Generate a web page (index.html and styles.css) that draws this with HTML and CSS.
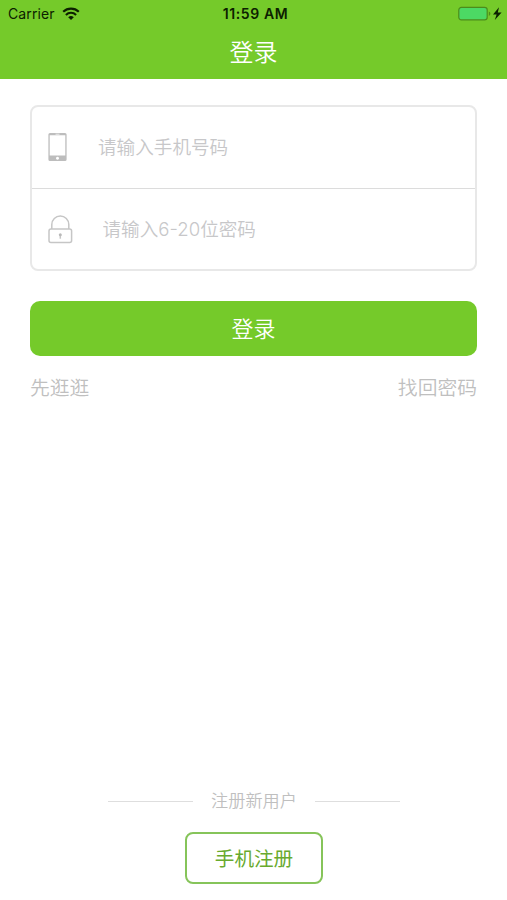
FILE: index.html
```html
<!DOCTYPE html>
<html lang="zh-CN">
<head>
  <meta charset="UTF-8" />
  <meta name="viewport" content="width=device-width, initial-scale=1.0"/>
  <title>登录</title>
  <link rel="stylesheet" href="styles.css">
</head>
<body>

  <header class="header">
    <div class="statusbar">
      <div class="carrier">
        <span>Carrier</span>
        <svg class="wifi" width="18" height="13" viewBox="0 0 18 13">
          <path d="M1.2 4.8a11.2 11.2 0 0 1 15.6 0M3.9 7.9a7.3 7.3 0 0 1 10.2 0" fill="none" stroke="#0c2000" stroke-width="2.1"/>
          <path d="M6.2 10.2a4.2 4.2 0 0 1 5.600 0L9 12.900z" fill="#0c2000"/>
        </svg>
      </div>
      <span class="time">11:59 AM</span>
      <svg class="battery" width="45" height="16" viewBox="0 0 45 16">
        <rect x="0.8" y="1.3" width="28.4" height="12.6" rx="2.6" fill="#4cd964" stroke="#4c8c1b" stroke-width="1.2"/>
        <path d="M30.8 5.500v4.400q1.600-.6 1.600-2.200T30.800 5.500z" fill="#4c8c1b"/>
        <path d="M41 1.300 35 8.500h3.600l-1.800 5.400L43.600 6.500H39.800z" fill="#0c2000"/>
      </svg>
    </div>
    <h1>登录</h1>
  </header>

  <main>
    <form class="login-form">
      <div class="fields">
        <label class="field">
          <svg width="20" height="30" viewBox="0 0 20 30">
            <path fill="#bdbdbd" fill-rule="evenodd" d="M2 1h15a1.6 1.6 0 0 1 1.6 1.6v24.8A1.6 1.6 0 0 1 17 29H2a1.6 1.6 0 0 1-1.600-1.600V2.600A1.600 1.600 0 0 1 2 1zM1.700 3.300v20.100h15.600V3.300zM9.500 24.800a1.500 1.500 0 1 0 .01 0z"/>
            <path d="M7.500 2.200h4" stroke="#fff" stroke-width="0.7"/>
          </svg>
          <input class="phone" type="tel" placeholder="请输入手机号码">
        </label>
        <label class="field">
          <svg width="25" height="30" viewBox="0 0 25 30">
            <g fill="none" stroke="#c6c6c6" stroke-width="1.5">
              <rect x="1" y="15" width="22.600" height="13.600" rx="2"/>
              <path d="M3.800 15V10.500a8.500 8.500 0 0 1 17 0V15"/>
              <path d="M12.300 20.500v4.200"/>
            </g>
            <circle cx="12.300" cy="20.700" r="1.500" fill="#b9b9b9"/>
          </svg>
          <input class="password" type="password" placeholder="请输入6-20位密码">
        </label>
      </div>
      <button class="login" type="button">登录</button>
      <div class="links">
        <a>先逛逛</a>
        <a>找回密码</a>
      </div>
    </form>
  </main>

  <footer>
    <div class="divider">注册新用户</div>
    <button class="register" type="button">手机注册</button>
  </footer>

</body>
</html>
```

FILE: styles.css
```css
:root {
  --green: #75ca2a;
  --dark-green: #68aa2e;
  --border: #e8e8e8;
  --gray: #c7c7c9;
}

* {
  box-sizing: border-box;
}

body {
  margin: 0;
  height: 100vh;
  display: flex;
  flex-direction: column;
  background: #fff;
  font-family: Inter, 'Noto Sans CJK SC', sans-serif;
  font-weight: 350;
}

button,
input {
  font-family: inherit;
  font-weight: inherit;
}

svg {
  display: block;
  flex: none;
}

.header {
  height: 79px;
  background: var(--green);
}

.statusbar {
  display: grid;
  grid-template-columns: 1fr auto 1fr;
  align-items: center;
  height: 27px;
  padding: 0 4px 0 8px;
  color: #0c2000;
  font-size: 14px;
  font-weight: 400;
}

.carrier {
  display: flex;
  align-items: center;
  gap: 7px;
  letter-spacing: 0.1px;
}

.time {
  font-weight: 600;
  letter-spacing: 0.6px;
}

.battery {
  justify-self: end;
}

h1 {
  margin: 0;
  color: #fff;
  font-size: 24px;
  font-weight: 350;
  line-height: 51px;
  text-align: center;
}

main {
  flex: 1;
  padding: 26px 30px 0;
}

.fields {
  height: 166px;
  border: 2px solid var(--border);
  border-radius: 8px;
}

.field {
  display: flex;
  align-items: center;
  height: 81px;
  padding: 0 0 2px 16px;
}

.field + .field {
  padding-bottom: 1px;
  border-top: 1px solid #dcdcdc;
}

input {
  flex: 1;
  min-width: 0;
  padding: 0;
  border: none;
  outline: none;
  background: none;
  font-size: 18.6px;
}

input::placeholder {
  color: var(--gray);
  opacity: 1;
}

.phone {
  margin-left: 30px;
}

.password {
  margin-left: 29.5px;
}

.login {
  display: block;
  width: 100%;
  height: 55px;
  margin-top: 30px;
  padding: 0 0 3px;
  border: none;
  border-radius: 10px;
  background: var(--green);
  color: #fff;
  font-size: 22px;
}

.links {
  display: flex;
  justify-content: space-between;
  margin-top: 17px;
  color: #bfbfbf;
  font-size: 19.8px;
  line-height: 30px;
}

footer {
  display: flex;
  flex-direction: column;
  align-items: center;
  padding: 0 0 16px 1px;
}

.divider {
  display: flex;
  align-items: center;
  gap: 18px;
  margin-bottom: 18px;
  color: #bfbfbf;
  font-size: 17.2px;
  line-height: 26px;
}

.divider::before,
.divider::after {
  content: "";
  width: 85px;
  height: 1px;
  background: #dedede;
}

.register {
  width: 138px;
  height: 52px;
  padding: 0 0 1px;
  border: 2px solid #86c45a;
  border-radius: 8px;
  background: #fff;
  color: var(--dark-green);
  font-size: 19.6px;
  font-weight: 400;
}
```
